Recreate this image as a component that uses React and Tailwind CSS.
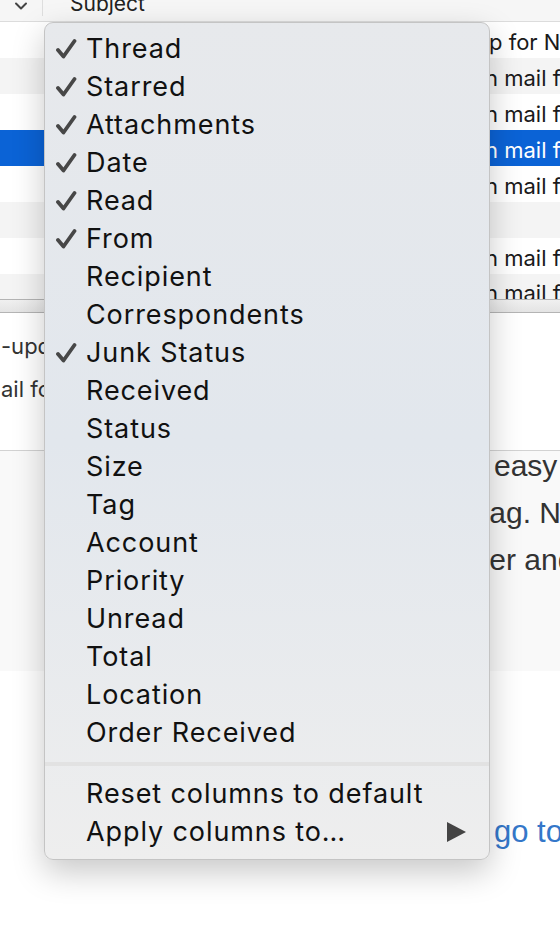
import React from 'react';

const items = [
  { label: 'Thread', checked: true },
  { label: 'Starred', checked: true },
  { label: 'Attachments', checked: true },
  { label: 'Date', checked: true },
  { label: 'Read', checked: true },
  { label: 'From', checked: true },
  { label: 'Recipient' },
  { label: 'Correspondents' },
  { label: 'Junk Status', checked: true },
  { label: 'Received' },
  { label: 'Status' },
  { label: 'Size' },
  { label: 'Tag' },
  { label: 'Account' },
  { label: 'Priority' },
  { label: 'Unread' },
  { label: 'Total' },
  { label: 'Location' },
  { label: 'Order Received' },
];

const rows = [
  { bg: 'bg-white', text: 'up for New' },
  { bg: 'bg-[#f4f4f4]', text: 'n mail for' },
  { bg: 'bg-white', text: 'n mail for' },
  { bg: 'bg-[#0b63d6]', text: 'n mail for', selected: true },
  { bg: 'bg-white', text: 'n mail for' },
  { bg: 'bg-[#f4f4f4]', text: '' },
  { bg: 'bg-white', text: 'n mail for' },
];

const Check = () => (
  <svg width="22" height="22" viewBox="0 0 22 22" fill="none">
    <path d="M3 12 L8.5 18.5 L19.5 3" stroke="#474747" strokeWidth="3.8" strokeLinecap="round" strokeLinejoin="round" />
  </svg>
);

const MenuItem = ({ label, checked, arrow }) => (
  <div className="flex items-center h-[38px] text-[27px] tracking-[0.9px] text-[#111]">
    <div className="w-[41px] shrink-0 flex items-center pl-[10px]">
      {checked && <Check />}
    </div>
    <span className="flex-1 whitespace-nowrap">{label}</span>
    {arrow && (
      <svg width="19" height="20" viewBox="0 0 19 20" className="mr-[23px]">
        <path d="M0 0 L19 10 L0 20 Z" fill="#444" />
      </svg>
    )}
  </div>
);

const App = () => {
  return (
    <div className="relative w-[560px] h-[936px] overflow-hidden bg-white font-['Inter',sans-serif]">
      {/* Column header */}
      <div className="flex h-[22px] bg-[#f6f6f6] border-b border-[#dcdcdc] overflow-hidden">
        <div className="w-[43px] flex justify-center items-start pt-[2px] border-r border-[#dedede] h-[16px]">
          <svg width="14" height="9" viewBox="0 0 14 9" fill="none">
            <path d="M2 1.5 L7 6.5 L12 1.5" stroke="#444" strokeWidth="2" strokeLinecap="round" strokeLinejoin="round" />
          </svg>
        </div>
        <span className="ml-[27px] -mt-[6px] text-[21px] leading-[20px] text-[#222]">Subject</span>
      </div>

      {/* Thread list */}
      {rows.map((r, i) => (
        <div key={i} className={`flex items-center h-[36px] overflow-hidden ${r.bg}`}>
          <div className={`shrink-0 ${i === 0 ? 'w-[476px]' : 'w-[485px]'}`} />
          <span className={`whitespace-nowrap text-[22px] pt-[5px] ${r.selected ? 'text-white' : 'text-[#1a1a1a]'}`}>{r.text}</span>
        </div>
      ))}
      <div className="flex items-start h-[25px] overflow-hidden bg-[#f4f4f4]">
        <div className="w-[485px] shrink-0" />
        <span className="whitespace-nowrap text-[22px] leading-[26px] pt-[6px] text-[#1a1a1a]">n mail for</span>
      </div>

      {/* Splitter */}
      <div className="h-[14px] border-t border-b border-[#b4b4b4] bg-gradient-to-b from-[#f0f0f0] to-[#e4e4e4]" />

      {/* Message header */}
      <div className="h-[138px] bg-white border-b border-[#d2d2d2] flex flex-col pt-[17px] gap-[10px] text-[22px] text-[#333] whitespace-nowrap">
        <span className="ml-[1px]">-update</span>
        <span className="ml-[1px]">ail for</span>
      </div>

      {/* Message body */}
      <div className="h-[220px] bg-[#f9f9f9] flex flex-col pl-[494px] font-['Liberation_Sans',sans-serif] text-[30px] leading-[47px] text-[#333] whitespace-nowrap">
        <span className="-mt-[9px]">easy</span>
        <span className="-ml-[13px]">tag. N</span>
        <span className="-ml-[13px]">ter and</span>
      </div>
      <div className="pt-[138px] pl-[494px] font-['Liberation_Sans',sans-serif] text-[31px] text-[#3477c9] whitespace-nowrap">
        go to
      </div>

      {/* Column picker popup */}
      <div className="absolute left-[44px] top-[22px] w-[446px] h-[838px] rounded-[9px] border border-[#c4c4c4] bg-gradient-to-b from-[#e7e9ec] via-[#e2e7ed] to-[#eeeeee] shadow-[0_12px_32px_rgba(0,0,0,0.22)] pt-[7px]">
        {items.map((it) => (
          <MenuItem key={it.label} label={it.label} checked={it.checked} />
        ))}
        <div className="mt-[10px] mb-[9px] h-[4px] bg-[#e2e2e2]" />
        <MenuItem label="Reset columns to default" />
        <MenuItem label="Apply columns to…" arrow />
      </div>
    </div>
  );
};

export default App;
